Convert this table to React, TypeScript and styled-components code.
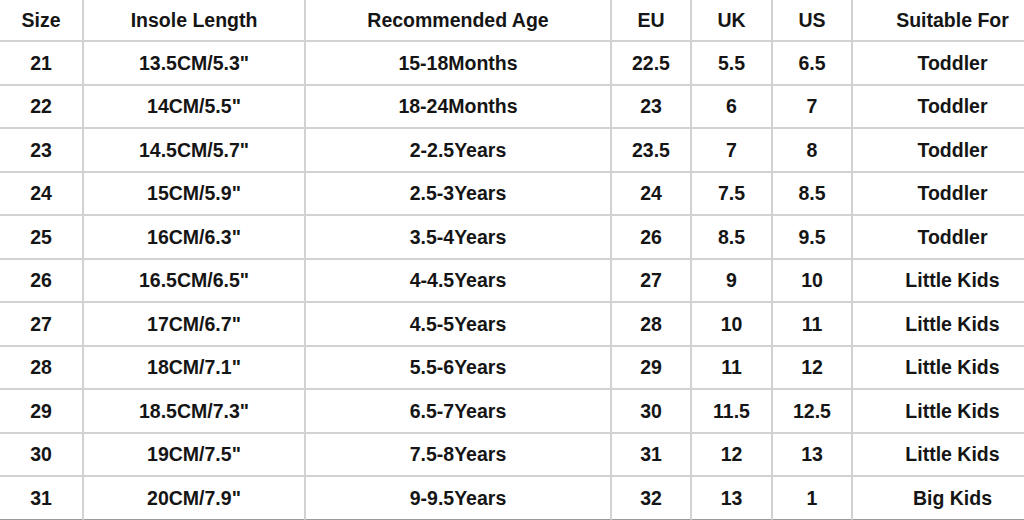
import React from "react";
import styled, { createGlobalStyle } from "styled-components";

const GlobalStyle = createGlobalStyle`
  html, body {
    margin: 0;
    padding: 0;
    background: #ffffff;
    overflow: hidden;
  }
  body {
    font-family: "Liberation Sans", Arial, sans-serif;
  }
`;

const Frame = styled.div`
  width: 1024px;
  height: 520px;
  overflow: hidden;
  background: #ffffff;
`;

const Table = styled.div`
  display: grid;
  width: 1052px;
  grid-template-columns: 84px 222px 306px 80px 81px 80px 199px;
  grid-template-rows: 42px;
  grid-auto-rows: 43.5px;
`;

const Cell = styled.div<{ $lastRow?: boolean; $lastCol?: boolean }>`
  box-sizing: border-box;
  display: flex;
  align-items: center;
  justify-content: center;
  font-family: "Liberation Sans", Arial, sans-serif;
  font-weight: 700;
  font-size: 19.5px;
  color: #151515;
  white-space: nowrap;
  border-right: ${(p) => (p.$lastCol ? "none" : "2px solid #d2d2d2")};
  border-bottom: 2px solid ${(p) => (p.$lastRow ? "#9a9a9a" : "#d2d2d2")};
  padding-top: 1px;
`;

const headers = [
  "Size",
  "Insole Length",
  "Recommended Age",
  "EU",
  "UK",
  "US",
  "Suitable For",
];

const rows: string[][] = [
  ["21", '13.5CM/5.3"', "15-18Months", "22.5", "5.5", "6.5", "Toddler"],
  ["22", '14CM/5.5"', "18-24Months", "23", "6", "7", "Toddler"],
  ["23", '14.5CM/5.7"', "2-2.5Years", "23.5", "7", "8", "Toddler"],
  ["24", '15CM/5.9"', "2.5-3Years", "24", "7.5", "8.5", "Toddler"],
  ["25", '16CM/6.3"', "3.5-4Years", "26", "8.5", "9.5", "Toddler"],
  ["26", '16.5CM/6.5"', "4-4.5Years", "27", "9", "10", "Little Kids"],
  ["27", '17CM/6.7"', "4.5-5Years", "28", "10", "11", "Little Kids"],
  ["28", '18CM/7.1"', "5.5-6Years", "29", "11", "12", "Little Kids"],
  ["29", '18.5CM/7.3"', "6.5-7Years", "30", "11.5", "12.5", "Little Kids"],
  ["30", '19CM/7.5"', "7.5-8Years", "31", "12", "13", "Little Kids"],
  ["31", '20CM/7.9"', "9-9.5Years", "32", "13", "1", "Big Kids"],
];

export default function App() {
  return (
    <>
      <GlobalStyle />
      <Frame>
        <Table>
          {headers.map((h, i) => (
            <Cell key={`h-${i}`} $lastCol={i === headers.length - 1}>
              {h}
            </Cell>
          ))}
          {rows.map((r, ri) =>
            r.map((c, ci) => (
              <Cell
                key={`${ri}-${ci}`}
                $lastRow={ri === rows.length - 1}
                $lastCol={ci === r.length - 1}
              >
                {c}
              </Cell>
            ))
          )}
        </Table>
      </Frame>
    </>
  );
}
